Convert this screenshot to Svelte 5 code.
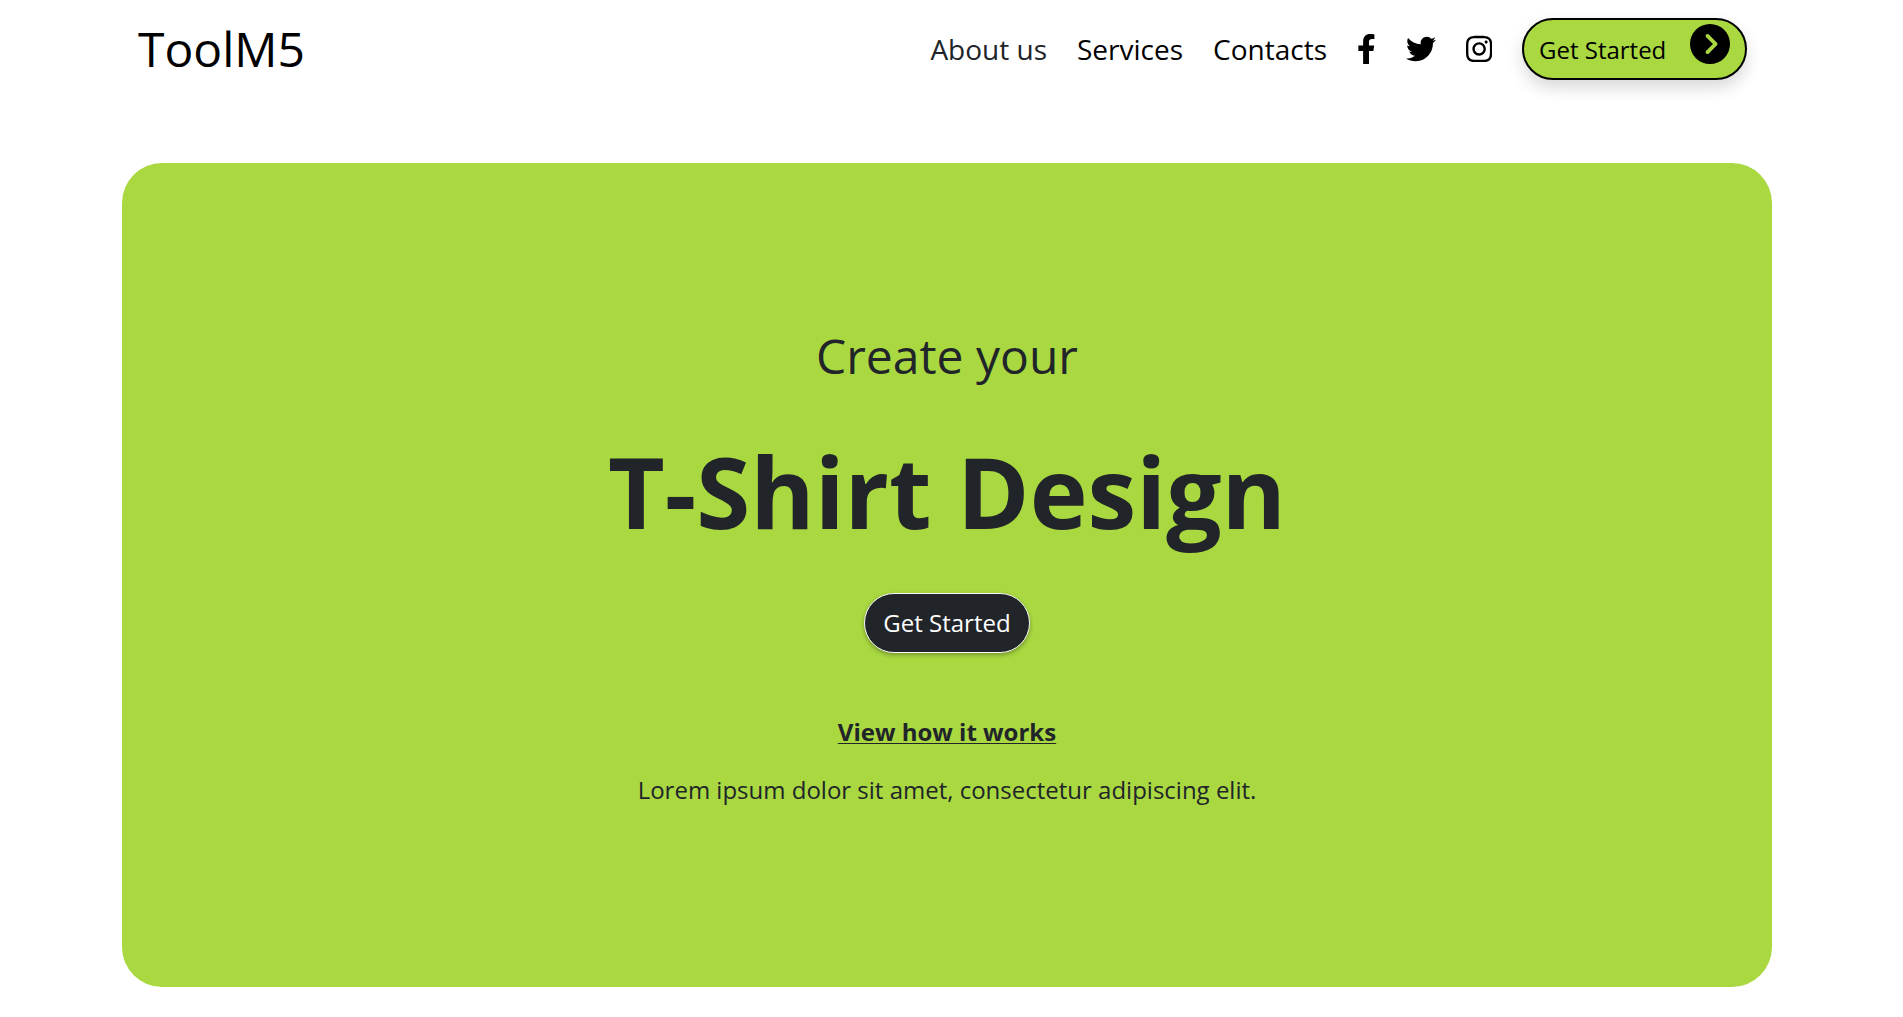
<script>
  const links = [
    { label: 'About us', muted: true },
    { label: 'Services', muted: false },
    { label: 'Contacts', muted: false }
  ];

  const socials = [
    {
      name: 'Facebook',
      width: 320,
      path: 'M279.14 288l14.22-92.66h-88.91v-60.13c0-25.35 12.42-50.06 52.24-50.06h40.42V6.26S260.43 0 225.36 0c-73.22 0-121.08 44.38-121.08 124.72v70.62H22.89V288h81.39v224h100.17V288z'
    },
    {
      name: 'Twitter',
      width: 512,
      path: 'M459.37 151.716c.325 4.548.325 9.097.325 13.645 0 138.72-105.583 298.558-298.558 298.558-59.452 0-114.68-17.219-161.137-47.106 8.447.974 16.568 1.299 25.34 1.299 49.055 0 94.213-16.568 130.274-44.832-46.132-.975-84.792-31.188-98.112-72.772 6.498.974 12.995 1.624 19.818 1.624 9.421 0 18.843-1.3 27.614-3.573-48.081-9.747-84.143-51.98-84.143-102.985v-1.299c13.969 7.797 30.214 12.67 47.431 13.319-28.264-18.843-46.781-51.005-46.781-87.391 0-19.492 5.197-37.36 14.294-52.954 51.655 63.675 129.3 105.258 216.365 109.807-1.624-7.797-2.599-15.918-2.599-24.04 0-57.828 46.782-104.934 104.934-104.934 30.213 0 57.502 12.67 76.67 33.137 23.715-4.548 46.456-13.32 66.599-25.34-7.798 24.366-24.366 44.833-46.132 57.827 21.117-2.273 41.584-8.122 60.426-16.243-14.292 20.791-32.161 39.308-52.628 54.253z'
    },
    {
      name: 'Instagram',
      width: 448,
      path: 'M224.1 141c-63.6 0-114.9 51.3-114.9 114.9s51.3 114.9 114.9 114.9S339 319.5 339 255.900 287.700 141 224.100 141zm0 189.600c-41.100 0-74.700-33.500-74.700-74.700s33.500-74.700 74.700-74.700 74.700 33.500 74.700 74.700-33.600 74.700-74.700 74.700zm146.400-194.300c0 14.900-12 26.800-26.800 26.800-14.900 0-26.800-12-26.800-26.800s12-26.800 26.800-26.800 26.800 12 26.800 26.800zm76.100 27.200c-1.700-35.900-9.900-67.700-36.200-93.900-26.200-26.200-58-34.400-93.900-36.200-37-2.100-147.900-2.100-184.900 0-35.800 1.700-67.600 9.900-93.900 36.100s-34.400 58-36.200 93.900c-2.100 37-2.100 147.900 0 184.900 1.700 35.900 9.900 67.700 36.200 93.900s58 34.400 93.900 36.200c37 2.100 147.900 2.100 184.900 0 35.900-1.700 67.700-9.900 93.900-36.200 26.200-26.200 34.400-58 36.200-93.900 2.100-37 2.100-147.800 0-184.800zM398.800 388c-7.800 19.600-22.900 34.700-42.600 42.600-29.500 11.700-99.500 9-132.100 9s-102.700 2.600-132.100-9c-19.600-7.800-34.700-22.900-42.600-42.600-11.700-29.500-9-99.500-9-132.100s-2.600-102.700 9-132.100c7.800-19.600 22.900-34.700 42.600-42.600 29.500-11.700 99.500-9 132.100-9s102.700-2.600 132.100 9c19.600 7.800 34.700 22.900 42.600 42.600 11.700 29.500 9 99.500 9 132.100s2.700 102.700-9 132.100z'
    }
  ];
</script>

<header class="header">
  <a class="brand" href="#home">ToolM5</a>
  <nav class="nav" aria-label="Main">
    {#each links as link}
      <a class="link" class:muted={link.muted} href="#{link.label.split(' ')[0].toLowerCase()}">{link.label}</a>
    {/each}
    {#each socials as social}
      <a class="social" href="#{social.name.toLowerCase()}" aria-label={social.name}>
        <svg viewBox="0 0 {social.width} 512" aria-hidden="true"><path d={social.path} /></svg>
      </a>
    {/each}
    <button class="cta" type="button">
      <span>Get Started</span>
      <svg viewBox="0 0 512 512" aria-hidden="true">
        <path d="M0 256a256 256 0 1 0 512 0A256 256 0 1 0 0 256zM241 377c-9.4 9.4-24.6 9.4-33.9 0s-9.4-24.6 0-33.9l87-87-87-87c-9.4-9.4-9.4-24.6 0-33.9s24.6-9.4 33.9 0L345 239c9.4 9.4 9.4 24.6 0 33.9L241 377z" />
      </svg>
    </button>
  </nav>
</header>

<main class="hero">
  <p class="lead">Create your</p>
  <h1>T-Shirt Design</h1>
  <button class="start" type="button">Get Started</button>
  <a class="how" href="#how">View how it works</a>
  <p class="note">Lorem ipsum dolor sit amet, consectetur adipiscing elit.</p>
</main>

<style>
  :global(body) {
    margin: 0;
    background: #fff;
    color: #212529;
    font-family: 'Segoe UI', 'Open Sans', 'Noto Sans', sans-serif;
  }

  .header {
    display: flex;
    align-items: center;
    justify-content: space-between;
    padding: 18px 156px 0 138px;
  }

  .brand {
    color: #000;
    font-size: 48px;
    line-height: 62px;
    text-decoration: none;
  }

  .nav {
    display: flex;
    align-items: center;
    gap: 30px;
  }

  .link {
    color: #000;
    font-size: 28px;
    line-height: 62px;
    text-decoration: none;
    white-space: nowrap;
  }

  .link.muted {
    color: #212529;
  }

  .social {
    display: flex;
    color: #000;
  }

  .social svg {
    display: block;
    width: auto;
    height: 30px;
    fill: currentColor;
  }

  .cta {
    box-sizing: border-box;
    display: flex;
    justify-content: space-between;
    width: 225px;
    height: 62px;
    padding: 4px 15px 0 15px;
    border: 2px solid #000;
    border-radius: 32px;
    background: #a9d841;
    box-shadow: 0 8px 16px rgba(0, 0, 0, 0.15);
    color: #000;
    font-family: inherit;
    font-size: 24px;
    line-height: 52px;
    white-space: nowrap;
  }

  .cta svg {
    width: 40px;
    height: 40px;
    fill: currentColor;
  }

  .hero {
    box-sizing: border-box;
    display: flex;
    flex-direction: column;
    align-items: center;
    margin: 83px 131px 30px 122px;
    padding: 155px 24px 178px;
    border-radius: 40px;
    background: #a9d841;
    text-align: center;
  }

  .lead,
  .note,
  h1 {
    margin: 0;
  }

  .lead {
    font-size: 48px;
    line-height: 75px;
  }

  h1 {
    margin-top: 38px;
    font-size: 98px;
    font-weight: 700;
    line-height: 120px;
  }

  .start {
    box-sizing: border-box;
    height: 60px;
    margin-top: 42px;
    padding: 0 18px;
    border: 1px solid #f8f9fa;
    border-radius: 30px;
    background: #212529;
    box-shadow: 0 2px 4px rgba(0, 0, 0, 0.3);
    color: #fff;
    font-family: inherit;
    font-size: 24px;
    line-height: 58px;
  }

  .how {
    margin-top: 60px;
    color: #212529;
    font-size: 24px;
    font-weight: 700;
    line-height: 38px;
    text-decoration: underline;
    text-decoration-thickness: 1px;
    text-underline-offset: 2px;
  }

  .note {
    margin-top: 20px;
    font-size: 24px;
    line-height: 38px;
  }
</style>
